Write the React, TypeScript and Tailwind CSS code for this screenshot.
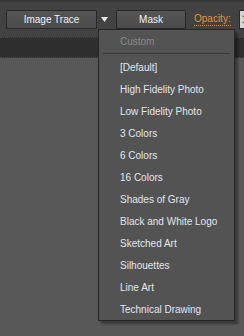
const presets = [
  "[Default]",
  "High Fidelity Photo",
  "Low Fidelity Photo",
  "3 Colors",
  "6 Colors",
  "16 Colors",
  "Shades of Gray",
  "Black and White Logo",
  "Sketched Art",
  "Silhouettes",
  "Line Art",
  "Technical Drawing",
];

export default function App() {
  return (
    <div className="relative h-[336px] w-[244px] overflow-hidden bg-[#585858] font-['Liberation_Sans',Arial,sans-serif] text-[10px]">
      {/* Control bar */}
      <div className="flex h-[37px] items-center border-t-2 border-[#363636] bg-[#424242] pl-[6px]">
        <button className="flex h-[19px] w-[91px] shrink-0 items-center justify-center rounded-[1px] border border-[#282828] bg-gradient-to-b from-[#555555] to-[#4a4a4a] text-[#eef2f6]">
          Image Trace
        </button>
        <svg viewBox="0 0 7 5" className="ml-[4px] h-[5px] w-[7px] shrink-0">
          <path d="M0 0H7L3.5 5Z" fill="#e8e8e8" />
        </svg>
        <button className="ml-[8px] flex h-[19px] w-[70px] shrink-0 items-center justify-center rounded-[1px] border border-[#282828] bg-gradient-to-b from-[#555555] to-[#4a4a4a] text-[#eef2f6]">
          Mask
        </button>
        <span className="ml-[8px] shrink-0 border-b border-dotted border-[#e08a3a] leading-[12px] text-[#ec8d3a]">
          Opacity:
        </span>
        <div className="ml-[8px] flex h-[19px] w-[20px] shrink-0 items-center border border-[#282828] bg-[#d6d6d6] pl-[2px] text-[#222]">
          1
        </div>
      </div>
      <div className="h-[21px] border-b border-t border-dotted border-[#4a4a4a] border-b-[#484848] bg-[#2e2e2e]" />

      {/* Preset menu */}
      <div className="absolute left-[98px] top-[29px] w-[137px] border border-[#262626] bg-[#535353] shadow-[3px_3px_2px_rgba(0,0,0,0.35)]">
        <div className="flex h-[22px] items-center pl-[21px] text-[#8a8a8a]">Custom</div>
        <div className="mx-[4px] mb-[2px] mt-[1px] h-px bg-[#3a3a3a]" />
        <div className="flex flex-col">
          {presets.map((p) => (
            <div key={p} className="flex h-[22px] items-center pl-[21px] text-[#e2e7ee]">
              {p}
            </div>
          ))}
        </div>
      </div>
    </div>
  );
}
